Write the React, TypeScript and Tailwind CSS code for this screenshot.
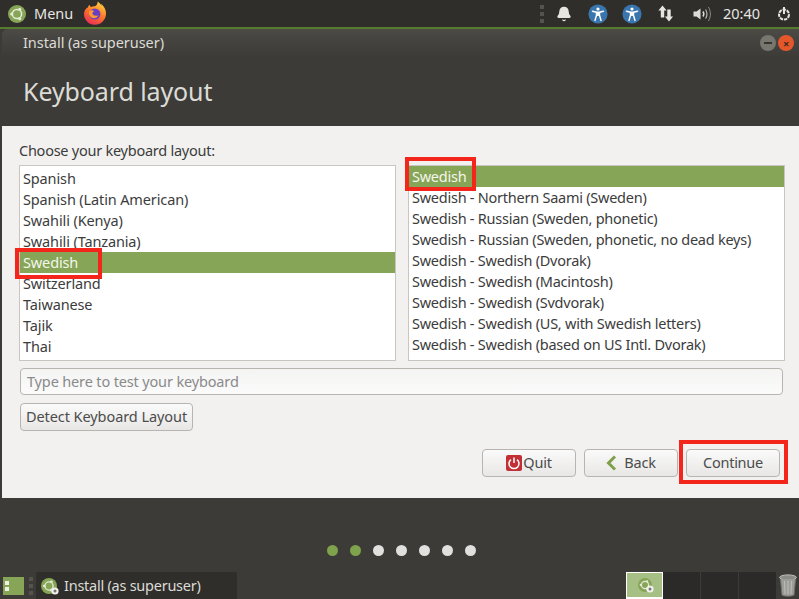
import { Bell } from 'lucide-react';

const leftItems = ['Spanish', 'Spanish (Latin American)', 'Swahili (Kenya)', 'Swahili (Tanzania)', 'Swedish', 'Switzerland', 'Taiwanese', 'Tajik', 'Thai'];
const rightItems = [
  'Swedish',
  'Swedish - Northern Saami (Sweden)',
  'Swedish - Russian (Sweden, phonetic)',
  'Swedish - Russian (Sweden, phonetic, no dead keys)',
  'Swedish - Swedish (Dvorak)',
  'Swedish - Swedish (Macintosh)',
  'Swedish - Swedish (Svdvorak)',
  'Swedish - Swedish (US, with Swedish letters)',
  'Swedish - Swedish (based on US Intl. Dvorak)',
  'Swedish - Swedish (Sweden, with dead keys)',
];

function UbuntuLogo({ size = 18 }: { size?: number }) {
  return (
    <svg width={size} height={size} viewBox="0 0 18 18">
      <circle cx="9" cy="9" r="9" fill="#87a556" />
      <circle cx="9" cy="9" r="4.6" fill="none" stroke="#e4ead8" strokeWidth="1.5" />
      <circle cx="3.6" cy="9" r="1.5" fill="#e4ead8" />
      <circle cx="11.7" cy="4.3" r="1.5" fill="#e4ead8" />
      <circle cx="11.7" cy="13.7" r="1.5" fill="#e4ead8" />
    </svg>
  );
}

function InstallerIcon({ size = 16 }: { size?: number }) {
  return (
    <div className="relative" style={{ width: size, height: size }}>
      <UbuntuLogo size={size} />
      <svg className="absolute -right-[2px] -bottom-[1px]" width="8" height="8" viewBox="0 0 8 8">
        <circle cx="4" cy="4" r="3.6" fill="#f0f0ee" />
        <circle cx="4" cy="4" r="1.5" fill="#77766f" />
      </svg>
    </div>
  );
}

function Firefox() {
  return (
    <svg width="24" height="25" viewBox="0 0 24 25">
      <defs>
        <linearGradient id="ff" x1="0.7" y1="0" x2="0.2" y2="1">
          <stop offset="0" stopColor="#ffd23f" />
          <stop offset="0.45" stopColor="#ff7a2a" />
          <stop offset="1" stopColor="#e8265a" />
        </linearGradient>
      </defs>
      <path d="M21 6 C20.4 4.8 19 3.2 17.8 2.4 C18.4 3.6 18.6 4.6 18.7 5.2 C17.6 2.8 15.8 1.4 14.6 0.6 C15 3 13.4 4.4 12 5.2 C10.6 5 9.2 5.3 8 6 C7.2 5.6 6.8 4.8 6.6 3.8 C5.4 4.6 5 5.8 4.8 6.6 C3 7.4 1.4 9.4 1 12.5 C0.8 18.8 5.6 23.8 11.8 23.8 C18 23.8 23 18.8 23 12.5 C23 10 22.2 7.8 21 6 Z" fill="url(#ff)" />
      <circle cx="11.8" cy="13" r="5.6" fill="#6b3fc4" />
      <path d="M6.2 10.2 C8 8.6 10.4 9 11 10.4 C9.8 11 9.2 11.6 9.4 12.6 C10 14.8 13 15.4 15.4 14.2 C14.4 16.8 11 18 8.6 16.6 C6.4 15.4 5.4 12.6 6.2 10.2 Z" fill="#ff9a2e" />
    </svg>
  );
}

function Accessibility() {
  return (
    <svg width="20" height="20" viewBox="0 0 20 20">
      <circle cx="10" cy="10" r="9.6" fill="#3a76ae" />
      <circle cx="10" cy="5" r="1.6" fill="#fff" />
      <path d="M4.5 7.2 L8.4 8.2 L8.6 11 L7 16.4 M15.5 7.2 L11.6 8.2 L11.4 11 L13 16.4 M8.4 8.2 H11.6 M8.6 11 H11.4" stroke="#fff" strokeWidth="1.5" fill="none" strokeLinecap="round" />
      <rect x="8.5" y="8" width="3" height="3.6" fill="#fff" />
    </svg>
  );
}

function Arrows() {
  return (
    <svg width="16" height="17" viewBox="0 0 16 17" fill="#e6e5e2">
      <path d="M4.5 0.5 L8.6 5.5 H6.2 V12.5 H2.8 V5.5 H0.4 Z" />
      <path d="M11 16.5 L6.9 11.5 H9.3 V4.5 H12.7 V11.5 H15.1 Z" />
    </svg>
  );
}

function Speaker() {
  return (
    <svg width="19" height="16" viewBox="0 0 19 16" fill="none">
      <path d="M0.5 5.5 H3.5 L7.5 2.5 V13.5 L3.5 10.5 H0.5 Z" fill="#dcdbd8" />
      <path d="M10 5.5 C11 7 11 9 10 10.5" stroke="#dcdbd8" strokeWidth="1.5" />
      <path d="M12.6 3.5 C14.4 6 14.4 10 12.6 12.5" stroke="#b9b8b4" strokeWidth="1.2" />
      <path d="M15.4 1 C18 5 18 11 15.4 15" stroke="#8f8e8a" strokeWidth="1" />
    </svg>
  );
}

function Power() {
  return (
    <svg width="16" height="16" viewBox="0 0 16 16" fill="none">
      <circle cx="8" cy="8.6" r="5" stroke="#e6e5e2" strokeWidth="2" strokeDasharray="3.4 0.9" />
      <path d="M8 1 V8" stroke="#e6e5e2" strokeWidth="2" />
    </svg>
  );
}

function Handle() {
  return (
    <div className="flex flex-col gap-[3px]">
      <div className="w-[4px] h-[4px] bg-[#54534e]" />
      <div className="w-[4px] h-[4px] bg-[#54534e]" />
      <div className="w-[4px] h-[4px] bg-[#54534e]" />
    </div>
  );
}

function Highlight({ className }: { className: string }) {
  return <div className={`absolute border-[4px] border-[#f4261c] pointer-events-none ${className}`} />;
}

function ListBox({ items, selected, className }: { items: string[]; selected: number; className: string }) {
  return (
    <div className={`w-[377px] h-[196px] overflow-hidden bg-white border border-[#c9c6c2] ${className}`}>
      {items.map((item, i) => (
        <div key={item} className={`h-[21px] shrink-0 leading-[21px] whitespace-nowrap ${i === selected ? 'bg-[#87a556] text-[#f4f6ee]' : 'text-[#3c3c3c]'}`}>
          {item}
        </div>
      ))}
    </div>
  );
}

function Button({ children, className = '' }: { children: React.ReactNode; className?: string }) {
  return (
    <button className={`h-[28px] rounded-[4px] border border-[#b8b5b0] bg-gradient-to-b from-[#fafafa] to-[#e8e7e5] text-[#4c4c4c] flex items-center justify-center ${className}`}>
      {children}
    </button>
  );
}

export default function App() {
  return (
    <div className="w-[799px] h-[599px] overflow-hidden flex flex-col bg-[#3c3b37] text-[14.5px] tracking-[-0.25px]" style={{ fontFamily: '"Noto Sans", sans-serif' }}>
      <div className="h-[27px] shrink-0 bg-[#2f2e2b] flex items-center text-[#e6e5e2]">
        <div className="ml-[8px]"><UbuntuLogo /></div>
        <span className="ml-[8px] w-[49px] tracking-normal">Menu</span>
        <Firefox />
        <div className="ml-auto flex items-center">
          <Handle />
          <Bell size={16} fill="#e6e5e2" stroke="#e6e5e2" className="ml-[12px]" />
          <div className="ml-[16px]"><Accessibility /></div>
          <div className="ml-[14px]"><Accessibility /></div>
          <div className="ml-[16px]"><Arrows /></div>
          <div className="ml-[19px]"><Speaker /></div>
          <span className="ml-[11px] tracking-normal">20:40</span>
          <div className="ml-[16px] mr-[7px]"><Power /></div>
        </div>
      </div>
      <div className="h-[2px] shrink-0 bg-[#557b2f]" />

      <div className="relative ml-[2px] h-[469px] shrink-0 flex flex-col rounded-tl-[6px] overflow-hidden">
        <div className="h-[97px] shrink-0 bg-[#3c3b37] relative">
          <div className="h-[28px] bg-gradient-to-b from-[#4b4a45] to-[#3c3b37] flex items-center pl-[21px] pr-[5px] text-[#dcdbd6] tracking-[-0.05px]">
            <span>Install (as superuser)</span>
            <div className="ml-auto flex">
              <div className="w-[16px] h-[16px] rounded-full bg-[#77766f] flex items-center justify-center">
                <div className="w-[8px] h-[2px] bg-[#35342f]" />
              </div>
              <div className="w-[16px] h-[16px] ml-[2px] rounded-full bg-[#e4572a] flex items-center justify-center text-[#3c2a20] text-[11px] leading-none font-bold">×</div>
            </div>
          </div>
          <div className="pl-[21px] mt-[16px] text-[25px] leading-[36px] tracking-[-0.1px] text-[#dcdbd6]">Keyboard layout</div>
        </div>

        <div className="flex-1 bg-[#f2f1f0] relative pl-[17px] pr-[14px] text-[#3c3c3c]">
          <div className="h-[39px] pt-[14px] leading-[20px]">Choose your keyboard layout:</div>
          <div className="flex gap-[12px] h-[196px]">
            <ListBox items={leftItems} selected={4} className="pt-[2px] pl-0 [&>div]:pl-[3px] tracking-[-0.13px]" />
            <ListBox items={rightItems} selected={0} className="[&>div]:pl-[3px]" />
          </div>
          <div className="mt-[7px] ml-[1px] w-[763px] h-[27px] rounded-[4px] border border-[#b8b5b0] bg-gradient-to-b from-[#f4f4f3] to-[#fbfbfb] pl-[6px] leading-[25px] text-[#8a8a8a] tracking-[-0.15px]">
            Type here to test your keyboard
          </div>
          <Button className="mt-[8px] ml-[1px] w-[173px] tracking-[-0.07px]">Detect Keyboard Layout</Button>
          <div className="mt-[18px] flex justify-end gap-[8px] pr-[5px]">
            <Button className="w-[94px] gap-[1px]">
              <svg width="16" height="16" viewBox="0 0 16 16" fill="none">
                <rect width="16" height="16" rx="2" fill="#c22f34" />
                <path d="M5 4.6 A5 5 0 1 0 11 4.6" stroke="#fff" strokeWidth="1.5" />
                <path d="M8 2.5 V8" stroke="#fff" strokeWidth="1.5" />
              </svg>
              Quit
            </Button>
            <Button className="w-[94px] gap-[7px]">
              <svg width="11" height="16" viewBox="0 0 11 16" fill="none">
                <path d="M9 1.5 L2.5 8 L9 14.5" stroke="#7f9f4a" strokeWidth="3" />
              </svg>
              Back
            </Button>
            <Button className="w-[94px]">Continue</Button>
          </div>
          <Highlight className="left-[13px] top-[122px] w-[87px] h-[31px]" />
          <Highlight className="left-[403px] top-[31px] w-[71px] h-[34px]" />
          <Highlight className="left-[677px] top-[314px] w-[109px] h-[44px]" />
        </div>
      </div>

      <div className="h-[74px] shrink-0 flex justify-center pt-[47px] pl-[4px] gap-[12px]">
        {[0, 1, 2, 3, 4, 5, 6].map(i => (
          <div key={i} className={`w-[11px] h-[11px] rounded-full ${i < 2 ? 'bg-[#7fa24c]' : 'bg-[#e0e0de]'}`} />
        ))}
      </div>

      <div className="h-[27px] shrink-0 flex items-stretch">
        <div className="ml-[3px] w-[21px] mt-[5px] mb-[4px] bg-[#87a556] flex flex-col justify-center gap-[2px] pl-[2px]">
          <div className="w-[4px] h-[4px] bg-[#eef1e6]" />
          <div className="w-[4px] h-[4px] bg-[#eef1e6]" />
        </div>
        <div className="ml-[5px] self-center"><Handle /></div>
        <div className="ml-[3px] w-[201px] bg-[#2f2e2b] rounded-t-[2px] flex items-center pl-[5px] text-[#dcdbd6]">
          <InstallerIcon />
          <span className="ml-[7px]">Install (as superuser)</span>
        </div>
        <div className="ml-auto flex">
          <div className="w-[37px] bg-[#a5bf85] border border-white border-b-2 flex items-center justify-center">
            <InstallerIcon size={14} />
          </div>
          <div className="w-[38px] bg-[#2b2a28] border-r border-[#3c3b37]" />
          <div className="w-[38px] bg-[#2b2a28] border-r border-[#3c3b37]" />
          <div className="w-[38px] bg-[#2b2a28] border-r border-[#3c3b37]" />
          <div className="w-[22px] flex items-center justify-center">
            <svg width="18" height="23" viewBox="0 0 18 23" fill="none">
              <ellipse cx="9" cy="3.5" rx="8.4" ry="2.6" fill="#8b8b87" stroke="#c4c4c0" />
              <path d="M1.5 5 L3 21 C5 22.6 13 22.6 15 21 L16.5 5" fill="#9c9c98" stroke="#70706c" />
              <path d="M5.5 7 L6 20 M9 7 V20.5 M12.5 7 L12 20" stroke="#bdbdb9" strokeWidth="1" />
            </svg>
          </div>
        </div>
      </div>
    </div>
  );
}
